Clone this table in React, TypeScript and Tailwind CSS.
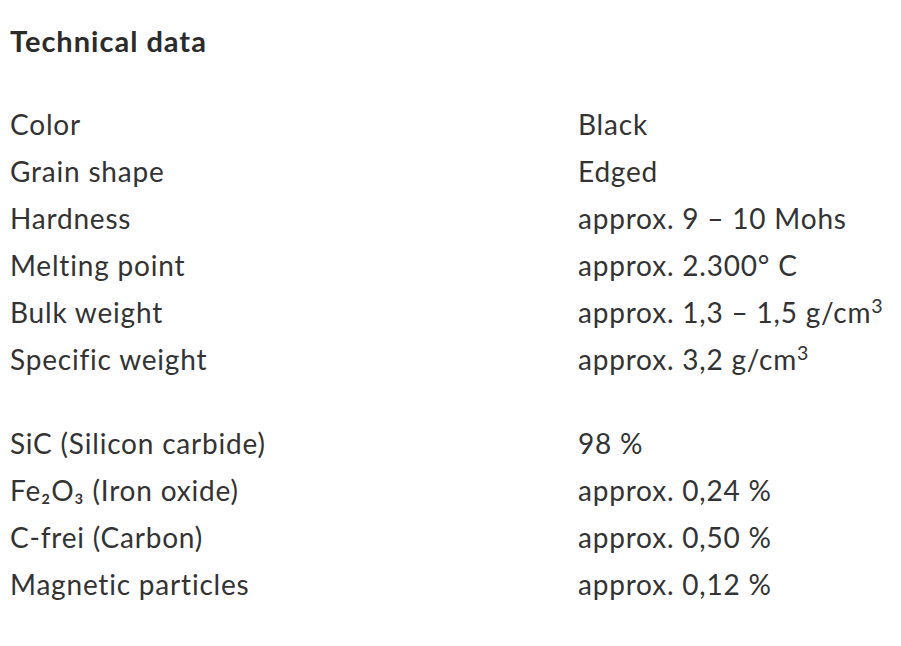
const groups: [string, React.ReactNode][][] = [
  [
    ["Color", "Black"],
    ["Grain shape", "Edged"],
    ["Hardness", "approx. 9 – 10 Mohs"],
    ["Melting point", "approx. 2.300° C"],
    [
      "Bulk weight",
      <>
        approx. 1,3 – 1,5 g/cm<sup className="text-[0.7em]">3</sup>
      </>,
    ],
    [
      "Specific weight",
      <>
        approx. 3,2 g/cm<sup className="text-[0.7em]">3</sup>
      </>,
    ],
  ],
  [
    ["SiC (Silicon carbide)", "98 %"],
    ["Fe₂O₃ (Iron oxide)", "approx. 0,24 %"],
    ["C-frei (Carbon)", "approx. 0,50 %"],
    ["Magnetic particles", "approx. 0,12 %"],
  ],
];

export default function App() {
  return (
    <div className="min-h-[646px] w-[901px] bg-white pl-[10px] pt-[22px] text-[#333333] font-['Lato',sans-serif] [font-variant-ligatures:none]">
      <h2 className="text-[29px] leading-[38px] font-bold tracking-[1px] text-[#2b2b2b]">Technical data</h2>
      <div className="mt-[41px] flex flex-col gap-[37px]">
        {groups.map((rows, i) => (
          <div key={i} className="flex flex-col">
            {rows.map(([label, value]) => (
              <div key={label} className="grid grid-cols-[568px_1fr] text-[28px] leading-[47px] tracking-[0.8px]">
                <span>{label}</span>
                <span>{value}</span>
              </div>
            ))}
          </div>
        ))}
      </div>
    </div>
  );
}
